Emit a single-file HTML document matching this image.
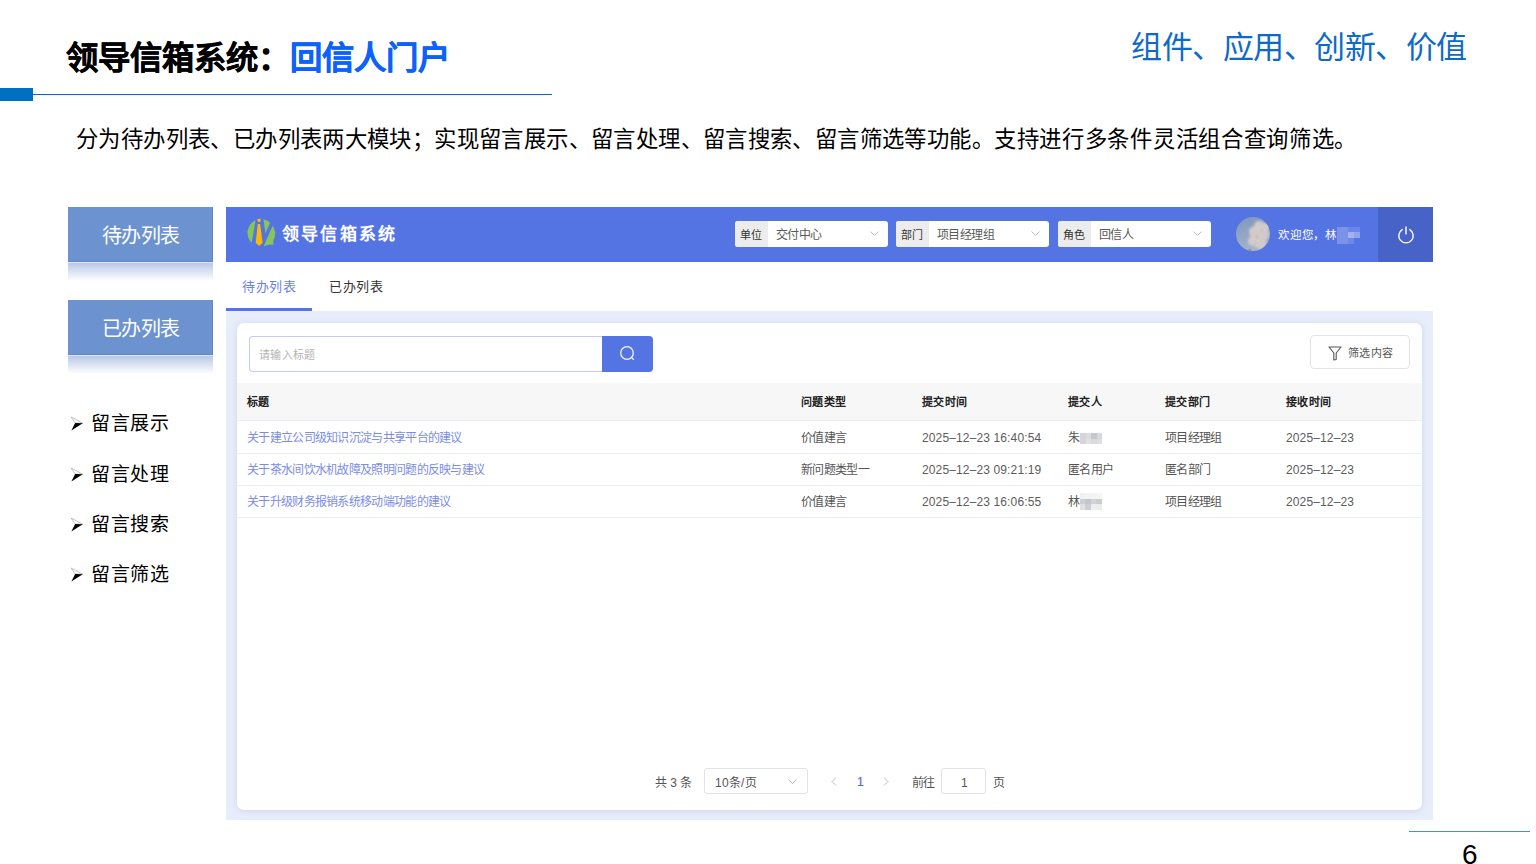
<!DOCTYPE html>
<html lang="zh-CN"><head><meta charset="utf-8">
<style>
*{margin:0;padding:0;box-sizing:border-box}
html,body{width:1536px;height:864px;overflow:hidden;background:#fff;font-family:"Liberation Sans",sans-serif}
.a{position:absolute;white-space:nowrap}
#title{left:66px;top:35px;font-size:32.3px;font-weight:bold;color:#000;line-height:46px;-webkit-text-stroke:0.4px currentColor}
#title span{color:#0d62fc}
#bar{left:0;top:88px;width:33px;height:13px;background:#0070c0}
#line{left:33px;top:94px;width:519px;height:1px;background:#0070c0}
#slogan{left:1131px;top:26px;font-size:31px;letter-spacing:-0.5px;color:#0e6ac6;line-height:44px}
#sub{left:76px;top:125px;font-size:22.4px;letter-spacing:0.48px;color:#000;line-height:30px}
.lbox{left:68px;width:145px;height:55px;background:#6c93d0;box-shadow:inset -1px -1px 0 #5f88ca;color:#fff;font-size:20px;letter-spacing:-0.6px;text-indent:0.6px;text-align:center;line-height:58px}
.lref{left:68px;width:145px;height:19px;background:linear-gradient(#e2e8f3 0,#e2e8f3 1px,#b7c7e4 1px,#d3ddef 40%,#ffffff 100%)}
.bul{left:70px;font-size:19px;letter-spacing:0.5px;color:#000;line-height:24px;display:flex}
.bul i{font-style:normal;font-size:14px;display:inline-block;width:21px}
/* screenshot */
#shot{left:226px;top:207px;width:1207px;height:613px;background:#fff;overflow:hidden}
#hdr{left:0;top:0;width:1207px;height:55px;background:#5574e4}
#pwr{left:1152px;top:0;width:55px;height:55px;background:#4863c8}
#brand{left:56px;top:15px;font-size:17px;font-weight:bold;color:#fff;letter-spacing:2.2px;line-height:26px}
.sel{top:14px;width:153px;height:26px;background:#fff;border-radius:3px;overflow:hidden}
.sel .lb{position:absolute;left:0;top:0;width:33px;height:26px;padding-right:2px;background:#ececec;color:#333;font-size:11px;line-height:28px;text-align:center}
.sel .vl{position:absolute;left:41px;top:1px;color:#5a5a5a;font-size:12px;letter-spacing:-0.6px;line-height:27px}
.sel svg{position:absolute;right:9px;top:10px}
#tabs{left:0;top:55px;width:1207px;height:49px;background:#fff}
#content{left:0;top:104px;width:1207px;height:509px;background:#e8edfb}
#card{left:11px;top:12px;width:1185px;height:487px;background:#fff;border-radius:7px;box-shadow:0 1px 6px rgba(120,130,175,.22)}
.th{font-size:11px;letter-spacing:0.4px;font-weight:bold;color:#222;line-height:14px}
.td{font-size:12px;letter-spacing:-0.7px;color:#555;line-height:14px}
.tl{font-size:12px;letter-spacing:-0.7px;color:#7b8ce8;line-height:14px}
.num{font-size:12px;letter-spacing:0.13px;color:#5c5c5c;line-height:14px}
.blur{display:inline-block;background:#dcdcdc;height:12px;vertical-align:middle}
</style></head><body>
<div id="title" class="a">领导信箱系统：<span>回信人门户</span></div>
<div id="bar" class="a"></div>
<div id="line" class="a"></div>
<div id="slogan" class="a">组件、应用、创新、价值</div>
<div id="sub" class="a"><span style="letter-spacing:0.39px">分为待办列表、已办列表两大模块；实现留言展示、留言处理、留言搜索、留言筛选等功能。</span><span style="letter-spacing:0.7px">支持进行多条件灵活组合查询筛选。</span></div>

<div class="a lbox" style="top:207px">待办列表</div>
<div class="a lref" style="top:262px"></div>
<div class="a lbox" style="top:300px">已办列表</div>
<div class="a lref" style="top:355px"></div>

<div class="a bul" style="top:412px"><svg width="14" height="18" viewBox="0 0 14 18" style="vertical-align:top;margin-top:0.5px;margin-right:7px"><path d="M1.2 4 L12.75 10.3 L5.1 10 Z" fill="none" stroke="#888" stroke-width="0.5"/><path d="M5.1 10 L12.75 10.3 L1.4 17.5 Z" fill="#000"/></svg>留言展示</div>
<div class="a bul" style="top:463px"><svg width="14" height="18" viewBox="0 0 14 18" style="vertical-align:top;margin-top:0.5px;margin-right:7px"><path d="M1.2 4 L12.75 10.3 L5.1 10 Z" fill="none" stroke="#888" stroke-width="0.5"/><path d="M5.1 10 L12.75 10.3 L1.4 17.5 Z" fill="#000"/></svg>留言处理</div>
<div class="a bul" style="top:513px"><svg width="14" height="18" viewBox="0 0 14 18" style="vertical-align:top;margin-top:0.5px;margin-right:7px"><path d="M1.2 4 L12.75 10.3 L5.1 10 Z" fill="none" stroke="#888" stroke-width="0.5"/><path d="M5.1 10 L12.75 10.3 L1.4 17.5 Z" fill="#000"/></svg>留言搜索</div>
<div class="a bul" style="top:563px"><svg width="14" height="18" viewBox="0 0 14 18" style="vertical-align:top;margin-top:0.5px;margin-right:7px"><path d="M1.2 4 L12.75 10.3 L5.1 10 Z" fill="none" stroke="#888" stroke-width="0.5"/><path d="M5.1 10 L12.75 10.3 L1.4 17.5 Z" fill="#000"/></svg>留言筛选</div>

<div id="shot" class="a">
  <div id="hdr" class="a">
    <svg class="a" style="left:17px;top:7px" width="36" height="36" viewBox="0 0 36 36">
      <path d="M12.5 6.3 A13.8 13.8 0 0 0 8.75 28.8 Z" fill="#86c55a"/>
      <path d="M20.4 5.2 A13.8 13.8 0 0 1 27.1 8.8 L22.5 19.2 Z" fill="#86c55a"/>
      <path d="M29.6 11.7 A13.8 13.8 0 0 1 30.2 26.5 L30.8 30.6 L25.8 30.8 L20.8 32 Z" fill="#86c55a"/>
      <path d="M14.2 5 L17.9 4.8 L17.3 7.7 L15 7.9 Z" fill="#ffb900"/>
      <path d="M14.8 10 L17.1 10 L19.6 28.8 L16.25 32 L12.7 28.8 Z" fill="#ffb900"/>
    </svg>
    <div id="brand" class="a">领导信箱系统</div>
    <div class="a sel" style="left:509px"><div class="lb">单位</div><div class="vl">交付中心</div><svg width="9" height="6" viewBox="0 0 9 6"><path d="M0.5 0.5 L4.5 4.5 L8.5 0.5" stroke="#bbb" fill="none" stroke-width="1"/></svg></div>
    <div class="a sel" style="left:670px"><div class="lb">部门</div><div class="vl">项目经理组</div><svg width="9" height="6" viewBox="0 0 9 6"><path d="M0.5 0.5 L4.5 4.5 L8.5 0.5" stroke="#bbb" fill="none" stroke-width="1"/></svg></div>
    <div class="a sel" style="left:832px"><div class="lb">角色</div><div class="vl">回信人</div><svg width="9" height="6" viewBox="0 0 9 6"><path d="M0.5 0.5 L4.5 4.5 L8.5 0.5" stroke="#bbb" fill="none" stroke-width="1"/></svg></div>
    <svg class="a" style="left:1010px;top:10px" width="34" height="34" viewBox="0 0 34 34">
      <defs><clipPath id="av"><circle cx="17" cy="17" r="17"/></clipPath>
      <linearGradient id="sky" x1="0" y1="0" x2="0.3" y2="1"><stop offset="0" stop-color="#7e97c0"/><stop offset="1" stop-color="#a3b3c9"/></linearGradient>
      <filter id="bl" x="-20%" y="-20%" width="140%" height="140%"><feGaussianBlur stdDeviation="1"/></filter></defs>
      <g clip-path="url(#av)">
        <rect width="34" height="34" fill="url(#sky)"/>
        <g filter="url(#bl)" fill="#d3cbca">
          <circle cx="23" cy="9" r="5"/><circle cx="19" cy="15" r="6"/><circle cx="26" cy="17" r="7"/>
          <circle cx="17" cy="24" r="5"/><circle cx="24" cy="26" r="6"/><circle cx="29" cy="10" r="4"/>
        </g>
        <g fill="#c8bfbe" opacity=".6"><circle cx="21" cy="20" r="2"/><circle cx="26" cy="13" r="1.5"/><circle cx="19" cy="27" r="1.5"/></g>
        <circle cx="14" cy="33" r="1.2" fill="#9a8a70"/>
      </g>
    </svg>
    <div class="a" style="left:1052px;top:21px;font-size:11.5px;letter-spacing:0.8px;color:#fff;line-height:14px">欢迎您，林</div>
    <div class="a" style="left:1111px;top:20px;width:23px;height:17px">
      <div class="a" style="left:0;top:0;width:11px;height:17px;background:rgba(170,185,240,.45)"></div>
      <div class="a" style="left:11px;top:0;width:12px;height:11px;background:rgba(160,175,240,.3)"></div>
      <div class="a" style="left:11px;top:5px;width:6px;height:6px;background:rgba(200,210,250,.6)"></div>
      <div class="a" style="left:17px;top:5px;width:6px;height:6px;background:rgba(190,200,250,.45)"></div>
      <div class="a" style="left:11px;top:11px;width:6px;height:6px;background:rgba(160,175,240,.35)"></div>
    </div>
    <div id="pwr" class="a">
      <svg class="a" style="left:19px;top:18.5px" width="18" height="19" viewBox="0 0 18 19"><path d="M5.2 3.6 A7.2 7.2 0 1 0 12.8 3.6" stroke="#fff" stroke-width="1.4" fill="none" stroke-linecap="round"/><path d="M9 1 L9 8" stroke="#fff" stroke-width="1.4" stroke-linecap="round"/></svg>
    </div>
  </div>
  <div id="tabs" class="a">
    <div class="a" style="left:16px;top:16px;font-size:13px;letter-spacing:0.6px;color:#6a7fe4;line-height:18px">待办列表</div>
    <div class="a" style="left:103px;top:16px;font-size:13px;letter-spacing:0.6px;color:#333;line-height:18px">已办列表</div>
    <div class="a" style="left:0;top:46px;width:86px;height:3px;background:#5574e4"></div>
  </div>
  <div id="content" class="a">
    <div id="card" class="a">
      <!-- search -->
      <div class="a" style="left:12px;top:13px;width:354px;height:36px;border:1.5px solid #c5ccf0;border-right:none;border-radius:4px 0 0 4px"></div>
      <div class="a" style="left:22px;top:25px;font-size:11px;letter-spacing:0.3px;color:#b4b4b4;line-height:14px">请输入标题</div>
      <div class="a" style="left:365px;top:13px;width:51px;height:36px;background:#5574e4;border-radius:0 4px 4px 0">
        <svg class="a" style="left:16px;top:9px" width="19" height="19" viewBox="0 0 19 19"><circle cx="9" cy="8" r="6.3" stroke="#f4f6ff" stroke-width="1.3" fill="none"/><path d="M13.4 12.4 L15.8 14.8" stroke="#f4f6ff" stroke-width="1.3"/></svg>
      </div>
      <!-- filter -->
      <div class="a" style="left:1073px;top:12px;width:100px;height:34px;border:1px solid #e2e5ec;border-radius:4px"></div>
      <svg class="a" style="left:1091px;top:23px" width="14" height="15" viewBox="0 0 14 15"><path d="M1 1 L13 1 L8.2 7 L8.2 13.5 L5.8 14 L5.8 7 Z" stroke="#555" stroke-width="1.1" fill="none" stroke-linejoin="round"/></svg>
      <div class="a" style="left:1111px;top:23px;font-size:11px;letter-spacing:0.3px;color:#555;line-height:14px">筛选内容</div>
      <!-- table -->
      <div class="a" style="left:0;top:60px;width:1185px;height:38px;background:#f7f7f8;border-bottom:1px solid #ebeef5"></div>
      <div class="a th" style="left:10px;top:72px">标题</div>
      <div class="a th" style="left:564px;top:72px">问题类型</div>
      <div class="a th" style="left:685px;top:72px">提交时间</div>
      <div class="a th" style="left:831px;top:72px">提交人</div>
      <div class="a th" style="left:928px;top:72px">提交部门</div>
      <div class="a th" style="left:1049px;top:72px">接收时间</div>

      <div class="a" style="left:0;top:130px;width:1185px;height:1px;background:#ebeef5"></div>
      <div class="a" style="left:0;top:162px;width:1185px;height:1px;background:#ebeef5"></div>
      <div class="a" style="left:0;top:194px;width:1185px;height:1px;background:#ebeef5"></div>

      <div class="a tl" style="left:10px;top:108px">关于建立公司级知识沉淀与共享平台的建议</div>
      <div class="a td" style="left:564px;top:108px">价值建言</div>
      <div class="a num" style="left:685px;top:108px">2025–12–23 16:40:54</div>
      <div class="a td" style="left:831px;top:108px">朱</div>
      <div class="a td" style="left:928px;top:108px">项目经理组</div>
      <div class="a num" style="left:1049px;top:108px">2025–12–23</div>

      <div class="a tl" style="left:10px;top:140px">关于茶水间饮水机故障及照明问题的反映与建议</div>
      <div class="a td" style="left:564px;top:140px">新问题类型一</div>
      <div class="a num" style="left:685px;top:140px">2025–12–23 09:21:19</div>
      <div class="a td" style="left:831px;top:140px">匿名用户</div>
      <div class="a td" style="left:928px;top:140px">匿名部门</div>
      <div class="a num" style="left:1049px;top:140px">2025–12–23</div>

      <div class="a tl" style="left:10px;top:172px">关于升级财务报销系统移动端功能的建议</div>
      <div class="a td" style="left:564px;top:172px">价值建言</div>
      <div class="a num" style="left:685px;top:172px">2025–12–23 16:06:55</div>
      <div class="a td" style="left:831px;top:172px">林</div>
      <div class="a td" style="left:928px;top:172px">项目经理组</div>
      <div class="a num" style="left:1049px;top:172px">2025–12–23</div>

      <div class="a" style="left:843.0px;top:110.0px;width:22px"><div class="a" style="left:0.0px;top:0.0px;width:5.6px;height:5.6px;background:#d3d5da"></div><div class="a" style="left:5.5px;top:0.0px;width:5.6px;height:5.6px;background:#dcdcdf"></div><div class="a" style="left:11.0px;top:0.0px;width:5.6px;height:5.6px;background:#c5c7cf"></div><div class="a" style="left:16.5px;top:0.0px;width:5.6px;height:5.6px;background:#d8d9dc"></div><div class="a" style="left:0.0px;top:5.5px;width:5.6px;height:5.6px;background:#d5d6da"></div><div class="a" style="left:5.5px;top:5.5px;width:5.6px;height:5.6px;background:#e2e2e4"></div><div class="a" style="left:11.0px;top:5.5px;width:5.6px;height:5.6px;background:#dadadd"></div><div class="a" style="left:16.5px;top:5.5px;width:5.6px;height:5.6px;background:#dfdfe1"></div></div>
      <div class="a" style="left:842.5px;top:170.0px;width:22px"><div class="a" style="left:0.0px;top:0.0px;width:5.6px;height:5.6px;background:#f1f1f3"></div><div class="a" style="left:5.5px;top:0.0px;width:5.6px;height:5.6px;background:#f3f3f4"></div><div class="a" style="left:11.0px;top:0.0px;width:5.6px;height:5.6px;background:#f4f4f5"></div><div class="a" style="left:16.5px;top:0.0px;width:5.6px;height:5.6px;background:#f5f5f6"></div><div class="a" style="left:0.0px;top:5.5px;width:5.6px;height:5.6px;background:#cfcfd2"></div><div class="a" style="left:5.5px;top:5.5px;width:5.6px;height:5.6px;background:#c2c6cf"></div><div class="a" style="left:11.0px;top:5.5px;width:5.6px;height:5.6px;background:#d3d2d5"></div><div class="a" style="left:16.5px;top:5.5px;width:5.6px;height:5.6px;background:#c9ccd2"></div><div class="a" style="left:0.0px;top:11.0px;width:5.6px;height:5.6px;background:#e0e0e2"></div><div class="a" style="left:5.5px;top:11.0px;width:5.6px;height:5.6px;background:#ccced5"></div><div class="a" style="left:11.0px;top:11.0px;width:5.6px;height:5.6px;background:#eeeeef"></div><div class="a" style="left:16.5px;top:11.0px;width:5.6px;height:5.6px;background:#ececed"></div></div>
      <!-- pagination -->
      <div class="a td" style="left:418px;top:453px;letter-spacing:0px">共 3 条</div>
      <div class="a" style="left:467px;top:445px;width:104px;height:26px;border:1px solid #e0e3ea;border-radius:3px"></div>
      <div class="a td" style="left:478px;top:453px;letter-spacing:0.25px">10条/页</div>
      <svg class="a" style="left:551px;top:456px" width="9" height="6" viewBox="0 0 9 6"><path d="M0.5 0.5 L4.5 4.5 L8.5 0.5" stroke="#bbb" fill="none" stroke-width="1"/></svg>
      <svg class="a" style="left:594px;top:454px" width="6" height="9" viewBox="0 0 6 9"><path d="M5 0.5 L1 4.5 L5 8.5" stroke="#bbb" fill="none" stroke-width="1"/></svg>
      <div class="a" style="left:620px;top:452px;font-size:12px;color:#4d6ce6;line-height:14px;-webkit-text-stroke:0.2px #4d6ce6">1</div>
      <svg class="a" style="left:646px;top:454px" width="6" height="9" viewBox="0 0 6 9"><path d="M1 0.5 L5 4.5 L1 8.5" stroke="#bbb" fill="none" stroke-width="1"/></svg>
      <div class="a td" style="left:675px;top:453px">前往</div>
      <div class="a" style="left:704px;top:445px;width:45px;height:26px;border:1px solid #e0e3ea;border-radius:3px"></div>
      <div class="a td" style="left:724px;top:453px">1</div>
      <div class="a td" style="left:756px;top:453px">页</div>
    </div>
  </div>
</div>

<div class="a" style="left:1409px;top:831px;width:121px;height:1px;background:#4a90d6"></div>
<div class="a" style="left:1462px;top:838px;font-size:28px;color:#000;line-height:34px">6</div>
</body></html>
